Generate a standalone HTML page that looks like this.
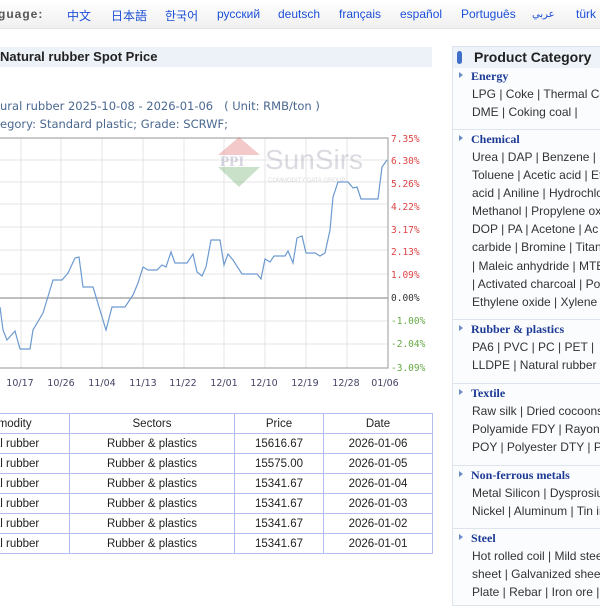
<!DOCTYPE html>
<html><head><meta charset="utf-8"><style>
*{margin:0;padding:0;box-sizing:border-box}
body{width:600px;height:600px;overflow:hidden;background:#fff;font-family:"Liberation Sans",Arial,sans-serif;position:relative}
.nav{position:absolute;left:0;top:0;width:600px;height:29px;background:linear-gradient(#fff,#f0f0f0);border-bottom:1px solid #e4e4e4}
.nav span{position:absolute;top:7px;font-size:12px;color:#1c4fd8;white-space:nowrap}
.nav .l{color:#555;font-weight:bold;letter-spacing:1px}
.title{position:absolute;left:0;top:47px;width:432px;height:20px;background:#edf2f9;font-weight:bold;font-size:13px;color:#222;line-height:20px}
.hd{position:absolute;left:0;font-family:"DejaVu Sans",sans-serif;font-size:11.5px;color:#4a6890;white-space:nowrap}
table{position:absolute;left:-65px;top:413px;border-collapse:collapse;font-size:11.5px;color:#222}
td{border:1.5px solid #b3bdf0;height:20px;text-align:center;padding:0}
.panel{position:absolute;left:452px;top:46px;width:148px;height:560px;border:1px solid #dde4ee;border-right:none;background:#fafcfe;overflow:hidden}
.ph{height:21px;background:#eef3f9;font-weight:bold;font-size:14px;color:#222;line-height:21px;padding-left:21px;position:relative}
.ph:before{content:"";position:absolute;left:4px;top:4px;width:5px;height:13px;border-radius:3px;background:#3f6fc8}
.sec{position:absolute;left:0;width:160px}
.sh{font-family:"Liberation Serif",serif;font-weight:bold;font-size:12px;color:#1d3a94;padding-left:18px;position:relative;height:18px;line-height:18px}
.sh:before{content:"";position:absolute;left:6px;top:5px;border-left:4px solid #6c8cc8;border-top:3px solid transparent;border-bottom:3px solid transparent}
.it{font-size:12px;color:#333;padding-left:19px;height:18.1px;line-height:18px;white-space:nowrap}
.sep{position:absolute;left:0;width:160px;border-top:1px solid #dde4ee}
</style></head><body>
<div class="nav">
<span class="l" style="left:-2px">guage:</span>
<span style="left:67px">中文</span><span style="left:111px">日本語</span><span style="left:165px">한국어</span>
<span style="left:217px">русский</span><span style="left:278px">deutsch</span><span style="left:339px">français</span>
<span style="left:400px">español</span><span style="left:461px">Português</span><span style="left:532px;font-size:10px;top:9px">عربي</span><span style="left:576px">türk</span>
</div>
<div class="title">Natural rubber Spot Price</div>
<div class="hd" style="top:99px">ural rubber 2025-10-08 - 2026-01-06 &nbsp; ( Unit: RMB/ton )</div>
<div class="hd" style="top:117px">egory: Standard plastic; Grade: SCRWF;</div>
<svg style="position:absolute;left:0;top:130px" width="440" height="265">
<g stroke="#e4e4e4" stroke-width="1">
<line x1="0" y1="30" x2="388" y2="30"/><line x1="0" y1="52" x2="388" y2="52"/><line x1="0" y1="74" x2="388" y2="74"/><line x1="0" y1="97" x2="388" y2="97"/><line x1="0" y1="120" x2="388" y2="120"/><line x1="0" y1="144" x2="388" y2="144"/><line x1="0" y1="191" x2="388" y2="191"/><line x1="0" y1="214" x2="388" y2="214"/>
<line x1="21" y1="8" x2="21" y2="238"/><line x1="61" y1="8" x2="61" y2="238"/><line x1="102" y1="8" x2="102" y2="238"/><line x1="143" y1="8" x2="143" y2="238"/><line x1="184" y1="8" x2="184" y2="238"/><line x1="224" y1="8" x2="224" y2="238"/><line x1="265" y1="8" x2="265" y2="238"/><line x1="306" y1="8" x2="306" y2="238"/><line x1="347" y1="8" x2="347" y2="238"/>
</g>
<polyline fill="none" stroke="#aaa" stroke-width="1.2" points="0,8 388,8 388,238 0,238"/>
<line x1="0" y1="168" x2="388" y2="168" stroke="#999" stroke-width="1.2"/>
<g opacity="0.35">
<polygon points="218,25 239,7 260,25" fill="#d66"/>
<polygon points="218,37 239,57 260,37" fill="#6a6"/>
<text x="220" y="36" font-size="15" font-weight="bold" fill="#88a" font-family="Liberation Serif">PPI</text>
<text x="265" y="39" font-size="28" fill="#99a" font-family="Liberation Sans">SunSirs</text>
<text x="268" y="52" font-size="6" fill="#999">COMMODITY DATA GROUP</text>
</g>
<polyline fill="none" stroke="#6d9ad0" stroke-width="1.2" points="0,177 3,200 7,210 15,201 20,219 30,219 33,200 43,183 53,150 62,150 68,143 75,128 79,127 83,157 93,157 106,200 112,177 125,177 133,165 138,153 143,137 148,140 157,140 162,135 166,137 171,122 175,133 187,133 193,124 197,142 202,146 206,137 211,110 220,110 224,135 228,124 233,130 242,144 257,144 261,149 265,129 270,132 274,126 285,126 288,121 293,133 297,108 302,106 306,123 315,123 320,126 325,123 330,100 333,67 338,52 348,52 353,58 357,57 361,69 378,69 382,37 387,30"/>
<g font-family="DejaVu Sans Mono,monospace" font-size="9.5">
<text x="391" y="12" fill="#d44">7.35%</text><text x="391" y="34" fill="#d44">6.30%</text><text x="391" y="57" fill="#d44">5.26%</text><text x="391" y="80" fill="#d44">4.22%</text><text x="391" y="103" fill="#d44">3.17%</text><text x="391" y="125" fill="#d44">2.13%</text><text x="391" y="148" fill="#d44">1.09%</text><text x="391" y="171" fill="#333">0.00%</text><text x="391" y="194" fill="#6a4">-1.00%</text><text x="391" y="217" fill="#6a4">-2.04%</text><text x="391" y="241" fill="#6a4">-3.09%</text>
</g>
<g font-family="DejaVu Sans,sans-serif" font-size="9.5" fill="#446" text-anchor="middle">
<text x="20" y="256">10/17</text><text x="61" y="256">10/26</text><text x="102" y="256">11/04</text><text x="143" y="256">11/13</text><text x="183" y="256">11/22</text><text x="224" y="256">12/01</text><text x="264" y="256">12/10</text><text x="305" y="256">12/19</text><text x="346" y="256">12/28</text><text x="385" y="256">01/06</text>
</g>
</svg>
<table>
<tr><td style="width:134px">Commodity</td><td style="width:165px">Sectors</td><td style="width:89px">Price</td><td style="width:109px">Date</td></tr>
<tr><td>Natural rubber</td><td>Rubber &amp; plastics</td><td>15616.67</td><td>2026-01-06</td></tr>
<tr><td>Natural rubber</td><td>Rubber &amp; plastics</td><td>15575.00</td><td>2026-01-05</td></tr>
<tr><td>Natural rubber</td><td>Rubber &amp; plastics</td><td>15341.67</td><td>2026-01-04</td></tr>
<tr><td>Natural rubber</td><td>Rubber &amp; plastics</td><td>15341.67</td><td>2026-01-03</td></tr>
<tr><td>Natural rubber</td><td>Rubber &amp; plastics</td><td>15341.67</td><td>2026-01-02</td></tr>
<tr><td>Natural rubber</td><td>Rubber &amp; plastics</td><td>15341.67</td><td>2026-01-01</td></tr>
</table>
<div class="panel">
<div class="ph">Product Category</div>
<div class="sec" style="top:20px"><div class="sh">Energy</div><div class="it">LPG | Coke | Thermal Coal</div><div class="it">DME | Coking coal |</div></div>
<div class="sep" style="top:82px"></div>
<div class="sec" style="top:83px"><div class="sh">Chemical</div>
<div class="it">Urea | DAP | Benzene | P</div><div class="it">Toluene | Acetic acid | Eth</div><div class="it">acid | Aniline | Hydrochlor</div><div class="it">Methanol | Propylene oxid</div><div class="it">DOP | PA | Acetone | Ac</div><div class="it">carbide | Bromine | Titaniu</div><div class="it">| Maleic anhydride | MTBE</div><div class="it">| Activated charcoal | Pota</div><div class="it">Ethylene oxide | Xylene |</div></div>
<div class="sep" style="top:272px"></div>
<div class="sec" style="top:273px"><div class="sh">Rubber &amp; plastics</div><div class="it">PA6 | PVC | PC | PET |</div><div class="it">LLDPE | Natural rubber |</div></div>
<div class="sep" style="top:336px"></div>
<div class="sec" style="top:337px"><div class="sh">Textile</div><div class="it">Raw silk | Dried cocoons |</div><div class="it">Polyamide FDY | Rayon y</div><div class="it">POY | Polyester DTY | Po</div></div>
<div class="sep" style="top:418px"></div>
<div class="sec" style="top:419px"><div class="sh">Non-ferrous metals</div><div class="it">Metal Silicon | Dysprosium</div><div class="it">Nickel | Aluminum | Tin in</div></div>
<div class="sep" style="top:481px"></div>
<div class="sec" style="top:482px"><div class="sh">Steel</div><div class="it">Hot rolled coil | Mild steel</div><div class="it">sheet | Galvanized sheet |</div><div class="it">Plate | Rebar | Iron ore |</div></div>
</div>
</body></html>
